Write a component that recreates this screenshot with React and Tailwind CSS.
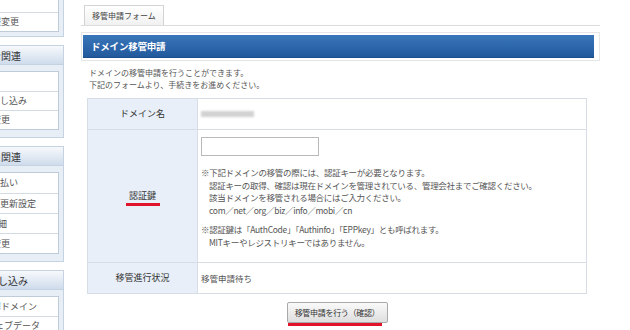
import React from "react"

const sideBoxes = [
  {
    head: { t: "ドメイン管理", c: "-ml-[38px]" },
    h: "h-[19px]",
    items: [
      { t: "ドメイン一覧", c: "-ml-[60px]" },
      { t: "登録者情報変更", c: "-ml-[44px]" },
    ],
  },
  {
    head: { t: "ドメイン関連", c: "-ml-[39px]" },
    h: "h-[19px]",
    items: [
      { t: "ドメイン検索", c: "-ml-[60px]" },
      { t: "新規お申し込み", c: "-ml-[36px]" },
      { t: "登録情報の変更", c: "-ml-[53px]" },
    ],
  },
  {
    head: { t: "サービス関連", c: "-ml-[39px]" },
    h: "h-[20px]",
    items: [
      { t: "料金お支払い", c: "-ml-[36px]" },
      { t: "自動更新設定", c: "-ml-[18px]" },
      { t: "ご利用明細", c: "-ml-[38px]" },
      { t: "契約内容変更", c: "-ml-[44px]" },
    ],
  },
  {
    head: { t: "各種お申し込み", c: "-ml-[42px]" },
    h: "h-[19px]",
    items: [
      { t: "取得ドメイン", c: "-ml-[17px]" },
      { t: "ウェブデータ", c: "-ml-[14px]" },
    ],
  },
]

function SideBox({ box, first }) {
  return (
    <div className={`border border-l-0 border-[#c5d2e1] bg-[#e8eef6] ${first ? "pb-[4px]" : "pb-[7px]"}`}>
      <div className="h-[19px] flex items-center border-b border-[#c5d2e1] bg-gradient-to-b from-[#f7f9fc] to-[#cfdcec] overflow-hidden whitespace-nowrap">
        <span className={`text-[10px] text-[#333] ${box.head.c}`}>{box.head.t}</span>
      </div>
      <div className="mt-[6px] mr-[4px] border border-l-0 border-[#bfcbd9] bg-white">
        {box.items.map((it, i) => (
          <div
            key={i}
            className={`${box.h} flex items-center overflow-hidden whitespace-nowrap ${i > 0 ? "border-t border-[#d3dbe4]" : ""}`}
          >
            <span className={`text-[9px] text-[#555] ${it.c}`}>{it.t}</span>
          </div>
        ))}
      </div>
    </div>
  )
}

export default function App() {
  return (
    <div className="w-[630px] h-[330px] overflow-hidden bg-white flex font-['Noto_Sans_CJK_JP','Noto_Sans',sans-serif] text-[#444]">
      {/* left menu (clipped) */}
      <div className="w-[64px] shrink-0 overflow-hidden -mt-[34px] flex flex-col gap-[8px]">
        {sideBoxes.map((b, i) => (
          <SideBox key={i} box={b} first={i === 0} />
        ))}
      </div>

      {/* main */}
      <div className="ml-[17px] w-[519px] shrink-0">
        <div className="pt-[5px] border-b border-[#dcdcdc] flex">
          <div className="ml-[3px] h-[20px] px-[7px] flex items-center border border-b-0 border-[#d3d3d3] bg-gradient-to-b from-white to-[#f1f1f1] text-[8px] text-[#444]">
            移管申請フォーム
          </div>
        </div>

        <div className="mt-[6px] border border-[#e6e6e6] pl-[1px] pr-[5px] py-[2px]">
          <div className="h-[23px] flex items-center pl-[8px] bg-gradient-to-b from-[#3a76ba] to-[#22599d] border-b border-[#1d4f8d]">
            <span className="text-[9.5px] tracking-[-0.2px] font-bold text-white">ドメイン移管申請</span>
          </div>
        </div>

        <div className="mt-[6px] pl-[8px] text-[8px] leading-[11.5px] text-[#555]">
          <p>ドメインの移管申請を行うことができます。</p>
          <p>下記のフォームより、手続きをお進めください。</p>
        </div>

        <div className="mt-[8px] ml-[6px] w-[500px] grid grid-cols-[110px_1fr] border border-[#d6dde5] text-[9px]">
          <div className="h-[31px] flex items-center justify-center bg-[#e8eff8] border-r border-b border-[#d6dde5] text-[#333]">
            ドメイン名
          </div>
          <div className="h-[31px] flex items-center pl-[3px] border-b border-[#d6dde5]">
            <div className="w-[53px] h-[6px] bg-[#d2d2d2] blur-[1px]"></div>
          </div>

          <div className="flex items-center justify-center bg-[#e8eff8] border-r border-b border-[#d6dde5] text-[#333]">
            <span className="relative">
              認証鍵
              <span className="absolute left-[-3px] right-[-4px] top-[14px] h-[3px] bg-[#e0132b]"></span>
            </span>
          </div>
          <div className="pl-[3px] pt-[7px] pb-[14px] border-b border-[#d6dde5]">
            <div className="w-[118px] h-[19px] border border-[#b9b9b9] bg-white"></div>
            <div className="mt-[10px] text-[8.5px] leading-[12.7px] tracking-[-0.3px] text-[#555]">
              <p>※下記ドメインの移管の際には、認証キーが必要となります。</p>
              <p className="pl-[8px]">認証キーの取得、確認は現在ドメインを管理されている、管理会社までご確認ください。</p>
              <p className="pl-[8px]">該当ドメインを移管される場合にはご入力ください。</p>
              <p className="pl-[8px]">com／net／org／biz／info／mobi／cn</p>
              <p className="mt-[6px]">※認証鍵は「AuthCode」「Authinfo」「EPPkey」とも呼ばれます。</p>
              <p className="pl-[8px]">MITキーやレジストリキーではありません。</p>
            </div>
          </div>

          <div className="h-[30px] flex items-center justify-center bg-[#e8eff8] border-r border-[#d6dde5] text-[#333]">
            移管進行状況
          </div>
          <div className="h-[30px] flex items-center pl-[3px] text-[8.5px] text-[#555]">移管申請待ち</div>
        </div>

        <div className="ml-[6px] w-[500px] mt-[8px] flex justify-center">
          <div className="relative w-[101px] h-[21px]">
            <button className="block w-[101px] h-[21px] border border-[#a9a9a9] rounded-[2px] bg-gradient-to-b from-[#fafafa] to-[#dedede] text-[8px] text-[#333] tracking-[-0.3px]">
              移管申請を行う（確認）
            </button>
            <div className="absolute left-[1px] w-[94px] top-[21px] h-[3px] bg-[#e0132b]"></div>
          </div>
        </div>
      </div>
    </div>
  )
}
